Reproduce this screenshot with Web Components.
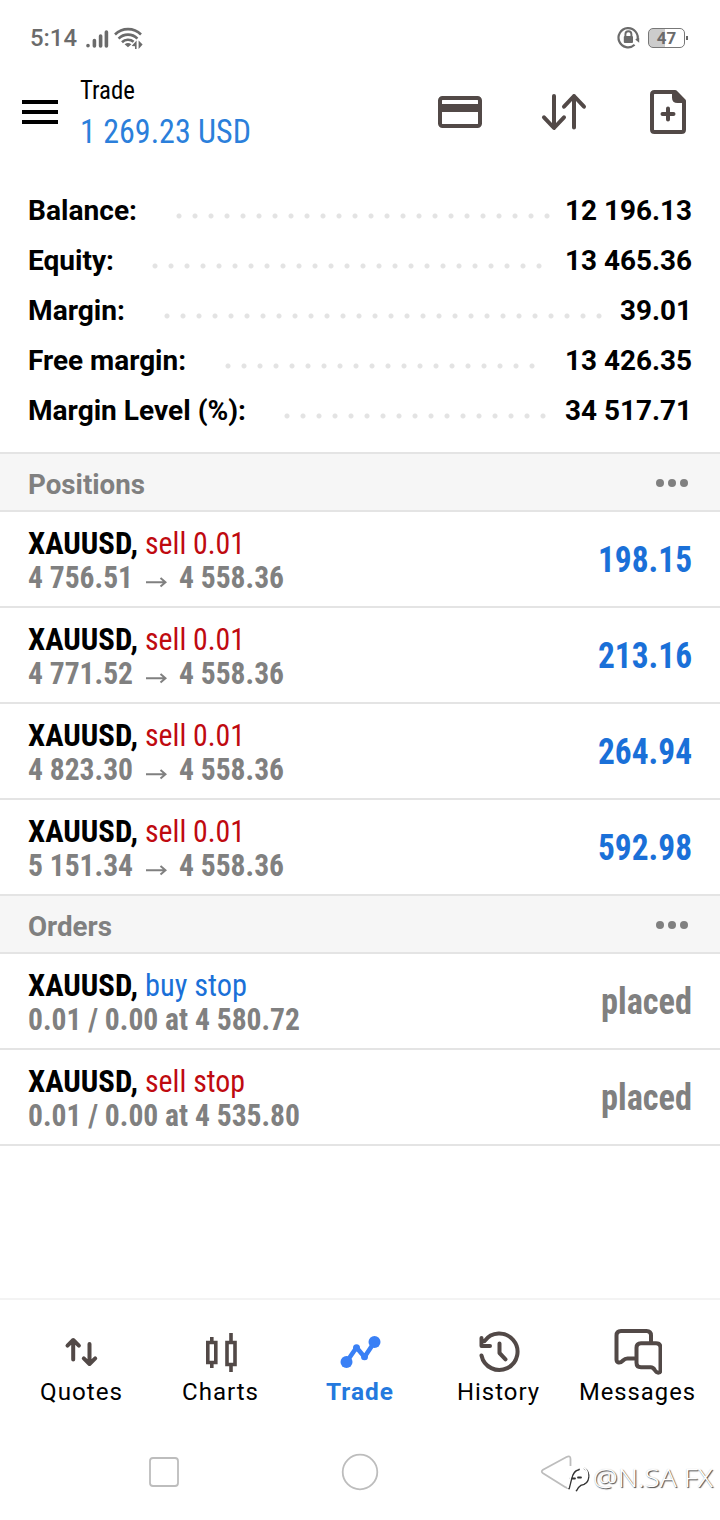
<!DOCTYPE html>
<html lang="en">
  <head>
    <meta charset="utf-8" />
    <title>Trade</title>
    <meta name="viewport" content="width=device-width, initial-scale=1" />

    <style>
      body {
        --ink: #524947;
        --blue: #1a70d8;
        --red: #bf0a10;
        --grey: #808080;
        --line: #e4e4e4;
        --condensed: 'Roboto Condensed', Roboto, 'Liberation Sans', sans-serif;
        margin: 0;
        width: 720px;
        height: 1520px;
        overflow: hidden;
        display: flex;
        flex-direction: column;
        background: #fff;
        color: #000;
        font-family: Roboto, 'Liberation Sans', sans-serif;
      }
      main {
        flex: 1;
      }
      .summary {
        padding: 34px 28px 16px;
        border-bottom: 2px solid var(--line);
      }
    </style>

    <template id="fit-text">
      <style>
        :host {
          display: inline-block;
          white-space: nowrap;
        }
        span {
          display: inline-block;
          transform-origin: 0 50%;
        }
      </style>
      <span><slot></slot></span>
    </template>

    <template id="status-bar">
      <style>
        :host {
          display: flex;
          height: 72px;
          padding: 0 32px 0 30px;
          box-sizing: border-box;
          color: #6b6b6b;
        }
        .time {
          font-size: 23px;
          font-weight: 500;
          line-height: 30px;
          margin: 24px 8px 0 0;
        }
        .gap {
          flex: 1;
        }
        svg {
          margin-top: 24px;
        }
        .battery {
          box-sizing: border-box;
          width: 37px;
          height: 20px;
          margin: 28px 0 0 8px;
          border: 1.5px solid #777;
          border-radius: 5px;
          background: linear-gradient(90deg, #ccc 47%, #fff 47%);
          font-size: 17px;
          font-weight: 700;
          line-height: 19px;
          text-align: center;
        }
        .nub {
          width: 2px;
          height: 4px;
          margin: 36px 0 0 1px;
          background: #666;
        }
      </style>
      <fit-text class="time" w="47"><slot name="time"></slot></fit-text>
      <svg width="60" height="28" viewBox="85 24 60 28" fill="none" stroke="#6b6b6b">
        <g stroke-width="3.6" stroke-linecap="round">
          <path d="M88 45.6v.1M94.4 40.5v5.4M100.6 36v9.9M106.4 32v13.9" />
        </g>
        <g stroke-width="2.6">
          <path d="M115 34.5a18.5 18.5 0 0 1 26 0M118.6 38.6a13 13 0 0 1 18.8 0M122 42.2a8.6 8.6 0 0 1 11.6-.4" />
        </g>
        <path d="M124.6 44.2q3.4-2.6 6.8 0l-3.4 3z" fill="#6b6b6b" stroke="none" />
        <path d="M136.6 40.5v8.5h-1.6v-2.8l-3.4-.2zM138.6 40.5v8.5l4-4.5z" fill="#6b6b6b" stroke="none" />
      </svg>
      <div class="gap"></div>
      <svg width="24" height="28" viewBox="616 24 24 28" fill="none" stroke="#6b6b6b" stroke-width="2.2">
        <path d="M637.4 40.2A9.6 9.6 0 1 0 634.6 44.8" />
        <path d="M635.2 39.4l4-1.6v5z" fill="#6b6b6b" stroke="none" />
        <path d="M625.4 36.5v-2.2a3 3 0 0 1 6 0v2.2" stroke-width="1.9" />
        <rect x="623.8" y="36" width="9.2" height="7" rx="1" fill="#6b6b6b" stroke="none" />
      </svg>
      <div class="battery"><slot name="battery"></slot></div>
      <div class="nub"></div>
    </template>

    <template id="trade-header">
      <style>
        :host {
          display: flex;
          height: 80px;
          padding: 0 28px 0 22px;
          box-sizing: border-box;
        }
        .menu {
          width: 36px;
          height: 24px;
          margin: 28px 22px 0 0;
        }
        .titles {
          flex: 1;
          padding-top: 3px;
          font-family: var(--condensed);
          font-stretch: 75%;
        }
        .title {
          display: block;
          font-size: 26px;
          line-height: 30px;
        }
        .profit {
          display: block;
          margin-top: 7px;
          font-size: 33px;
          line-height: 40px;
          color: #2b7fdb;
        }
        .actions {
          display: flex;
          gap: 56px;
          padding-top: 16px;
        }
      </style>
      <svg class="menu" viewBox="0 0 36 24">
        <path d="M0 2h36M0 12h36M0 22h36" stroke="#000" stroke-width="4" />
      </svg>
      <div class="titles">
        <fit-text class="title" w="55"><slot name="title"></slot></fit-text>
        <fit-text class="profit" w="171"><slot name="profit"></slot></fit-text>
      </div>
      <div class="actions">
        <svg width="48" height="48" viewBox="436 88 48 48" fill="none" stroke="#524947" stroke-width="4">
          <rect x="440" y="98" width="40" height="28" rx="2.5" />
          <path d="M440 108h40" stroke-width="8" />
        </svg>
        <svg width="48" height="48" viewBox="540 88 48 48" fill="none" stroke="#524947" stroke-width="4" stroke-linecap="round" stroke-linejoin="round">
          <path d="M554 96v31.5M544 117.300l10 10.700 10-10.700M574 127.500V96M564 106.700l10-10.700 10 10.700" />
        </svg>
        <svg width="48" height="48" viewBox="644 88 48 48" fill="none" stroke="#524947" stroke-width="4" stroke-linecap="round">
          <path d="M654.500 92h20.700l8.800 8.800v28.700q0 2.500-2.500 2.500h-27q-2.500 0-2.500-2.500v-35q0-2.500 2.500-2.500z" stroke-linejoin="round" />
          <path d="M672 91v6.500q0 5.500 5.500 5.500h7.500v-2.500l-9-9z" fill="#524947" stroke="none" />
          <path d="M662.500 114h11M668 108.500v11" />
        </svg>
      </div>
    </template>

    <template id="summary-row">
      <style>
        :host {
          display: flex;
          height: 50px;
          font-size: 28px;
          font-weight: 700;
          line-height: 50px;
        }
        .dots {
          height: 50px;
          background: radial-gradient(circle at 8px 8px, #e3e3e3 2px, transparent 3px) 0 21.5px / 16px 16px repeat-x;
        }
        .value {
          margin-left: auto;
        }
      </style>
      <div class="label"><fit-text><slot></slot></fit-text></div>
      <div class="dots"></div>
      <fit-text class="value"><slot name="value"></slot></fit-text>
    </template>

    <template id="section-head">
      <style>
        :host {
          display: flex;
          align-items: center;
          justify-content: space-between;
          box-sizing: border-box;
          height: 58px;
          padding: 0 32px 0 28px;
          border-bottom: 2px solid var(--line);
          background: #f6f6f6;
          color: var(--grey);
          font-size: 28px;
          font-weight: 700;
          line-height: 34px;
        }
        fit-text {
          padding-top: 5px;
        }
        svg {
          margin-top: 2px;
        }
      </style>
      <fit-text><slot></slot></fit-text>
      <svg width="32" height="8" viewBox="0 0 32 8" fill="#808080">
        <circle cx="4" cy="4" r="4" />
        <circle cx="16" cy="4" r="4" />
        <circle cx="28" cy="4" r="4" />
      </svg>
    </template>

    <template id="deal-row">
      <style>
        :host {
          display: flex;
          justify-content: space-between;
          box-sizing: border-box;
          height: 96px;
          padding: 14px 28px 0;
          border-bottom: 2px solid var(--line);
          font-family: var(--condensed);
          font-stretch: 75%;
          font-size: 32px;
          line-height: 34px;
        }
        .top {
          display: flex;
          gap: 7px;
          height: 34px;
        }
        .symbol,
        .details,
        .value {
          font-weight: 700;
        }
        .side {
          color: var(--red);
        }
        :host([side='buy']) .side {
          color: var(--blue);
        }
        .details {
          display: flex;
          height: 34px;
          color: var(--grey);
        }
        .details svg {
          margin: 0 12px 0 13px;
        }
        .value {
          margin-top: 16px;
          height: 36px;
          line-height: 36px;
          font-size: 36px;
          color: var(--blue);
        }
        :host([pending]) .value {
          color: var(--grey);
        }
      </style>
      <div>
        <div class="top">
          <fit-text class="symbol" w="110"><slot name="symbol"></slot></fit-text>
          <fit-text class="side"><slot name="side"></slot></fit-text>
        </div>
        <div class="details"></div>
      </div>
      <fit-text class="value"><slot name="value"></slot></fit-text>
    </template>

    <template id="tab-item">
      <style>
        :host {
          display: flex;
          flex-direction: column;
          align-items: center;
          padding-top: 28px;
          font-size: 24px;
          line-height: 28px;
        }
        svg {
          width: 48px;
          height: 48px;
          margin-bottom: 2px;
        }
        :host([active]) {
          color: #2479de;
          font-weight: 700;
        }
        fit-text {
          letter-spacing: 1px;
        }
      </style>
      <svg fill="none" stroke="#524947" stroke-width="4" stroke-linecap="round" stroke-linejoin="round"></svg>
      <fit-text><slot></slot></fit-text>
    </template>

    <template id="tab-bar">
      <style>
        :host {
          display: grid;
          grid-template-columns: repeat(5, 1fr);
          height: 124px;
          padding: 0 13px 0 12px;
          border-top: 2px solid #f3f3f3;
        }
      </style>
      <slot></slot>
    </template>

    <template id="system-nav">
      <style>
        :host {
          display: grid;
          position: relative;
          grid-template-columns: repeat(3, 1fr);
          place-items: center;
          height: 96px;
          padding: 0 66px;
        }
        .mark {
          position: absolute;
          left: 566px;
          top: 36px;
          display: flex;
          color: #fff;
          font-family: 'Noto Sans', sans-serif;
          font-size: 26px;
          font-weight: 300;
          line-height: 34px;
          text-shadow: 1px 1px 1px #444, 0 0 1px #ccc;
        }
        .mark svg {
          margin: 5px 3px 0 0;
        }
      </style>
      <svg width="40" height="40" fill="none" stroke="#bdbdbd" stroke-width="1.8">
        <rect x="6" y="6" width="28" height="28" rx="3" />
      </svg>
      <svg width="40" height="40" fill="none" stroke="#bdbdbd" stroke-width="1.8">
        <circle cx="20" cy="20" r="17.300" />
      </svg>
      <svg width="40" height="40" fill="none" stroke="#bdbdbd" stroke-width="1.8" stroke-linejoin="round">
        <path d="M34.500 14V7q0-4-4-2L7 17.700q-2.500 1.800 0 3.600L29 35q2 1.300 4 1.300" />
      </svg>
      <div class="mark">
        <svg width="24" height="28" viewBox="0 0 24 28" fill="none" stroke-linecap="round">
          <g id="logo" stroke="#333" stroke-width="1.8">
            <path d="M3 23.500l2.500-10Q7.500 5.500 13 4.500M4.500 13.500h4.500M12 12.500h3M18.500 3.500q4.500 3 4 9-.8 7-7.500 7.500-3 2-4.500 5.500" />
          </g>
          <path d="M2 22.500l2.500-10Q6.500 4.500 12 3.500M17.500 2.500q4.500 3 4 9-.8 7-7.500 7.500-3 2-4.500 5.500" stroke="#fff" stroke-width="1.600" />
        </svg>
        <fit-text w="120"><slot></slot></fit-text>
      </div>
    </template>
  </head>

  <body>
    <status-bar>
      <span slot="time">5:14</span>
      <span slot="battery">47</span>
    </status-bar>
    <trade-header>
      <span slot="title">Trade</span>
      <span slot="profit">1 269.23 USD</span>
    </trade-header>

    <main>
      <div class="summary">
        <summary-row w="109" start="142.500" dots="24" vw="127">Balance:<span slot="value">12 196.13</span></summary-row>
        <summary-row w="86" start="119.300" dots="25" vw="127">Equity:<span slot="value">13 465.36</span></summary-row>
        <summary-row w="97" start="130.500" dots="28" vw="72">Margin:<span slot="value">39.01</span></summary-row>
        <summary-row w="158" start="191.500" dots="20" vw="127">Free margin:<span slot="value">13 426.35</span></summary-row>
        <summary-row w="218" start="251.300" dots="17" vw="127">Margin Level (%):<span slot="value">34 517.71</span></summary-row>
      </div>

      <section-head w="117">Positions</section-head>
      <deal-row w="100" vw="94" from="4 756.51" to="4 558.36">
        <span slot="symbol">XAUUSD,</span><span slot="side">sell 0.01</span><span slot="value">198.15</span>
      </deal-row>
      <deal-row w="100" vw="94" from="4 771.52" to="4 558.36">
        <span slot="symbol">XAUUSD,</span><span slot="side">sell 0.01</span><span slot="value">213.16</span>
      </deal-row>
      <deal-row w="100" vw="94" from="4 823.30" to="4 558.36">
        <span slot="symbol">XAUUSD,</span><span slot="side">sell 0.01</span><span slot="value">264.94</span>
      </deal-row>
      <deal-row w="100" vw="94" from="5 151.34" to="4 558.36">
        <span slot="symbol">XAUUSD,</span><span slot="side">sell 0.01</span><span slot="value">592.98</span>
      </deal-row>

      <section-head w="84">Orders</section-head>
      <deal-row pending side="buy" w="102" vw="91" details="0.01 / 0.00 at 4 580.72">
        <span slot="symbol">XAUUSD,</span><span slot="side">buy stop</span><span slot="value">placed</span>
      </deal-row>
      <deal-row pending side="sell" w="100" vw="91" details="0.01 / 0.00 at 4 535.80">
        <span slot="symbol">XAUUSD,</span><span slot="side">sell stop</span><span slot="value">placed</span>
      </deal-row>
    </main>

    <tab-bar>
      <tab-item icon="quotes" w="83">Quotes</tab-item>
      <tab-item icon="charts" w="77">Charts</tab-item>
      <tab-item icon="trade" w="68" active>Trade</tab-item>
      <tab-item icon="history" w="83">History</tab-item>
      <tab-item icon="messages" w="117">Messages</tab-item>
    </tab-bar>
    <system-nav>@N.SA FX</system-nav>

    <script>
      const icons = {
        quotes: {
          box: '57.500 1328 48 48',
          art: '<path d="M72.700 1359.500v-18M67 1345.700l5.700-5.700 5.700 5.700M89 1344v18.500M83.300 1358.300l5.700 5.700 5.700-5.700"/>',
        },
        charts: {
          box: '196.500 1328 48 48',
          art: `<g stroke-linecap="butt" stroke-linejoin="miter" stroke-width="3.600">
            <path d="M207.300 1342.500h8v20h-8zM211.300 1337v5M211.300 1363v5"/>
            <path d="M226.500 1342.500h8v22h-8zM230.500 1333v9M230.500 1365v7"/></g>`,
        },
        trade: {
          box: '335.500 1328 48 48',
          art: `<path d="M346 1362l10-14.500 8 9.500 10-15" stroke="#3a80f5" stroke-width="4.600"/>
            <g fill="#3a80f5" stroke="none"><circle cx="346" cy="1362" r="6"/><circle cx="374" cy="1342" r="6"/>
            <circle cx="356" cy="1347.700" r="3.500"/><circle cx="364" cy="1356.700" r="3.500"/></g>`,
        },
        history: {
          box: '474.500 1328 48 48',
          art: `<path d="M481 1355.500A18.200 18.200 0 1 0 484 1341.200M481 1338v8h8.500M499 1343.500v9.500l6 6.300"/>`,
        },
        messages: {
          box: '613.500 1328 48 48',
          art: `<path d="M634 1358.500h-7q-2.500 0-4.500 2-2.500 2.500-4.500 2-2-.5-2-3v-24q0-4.500 4.500-4.500h25.500q4.500 0 4.500 4.500v6"/>
            <path d="M640.500 1343.300h15q4.500 0 4.500 4.500v22q0 2.500-1.800 2.800-2 .4-4-2.600-1.500-2.700-4-2.700h-9.700q-4.500 0-4.500-4.500v-15q0-4.500 4.500-4.500z"/>`,
        },
      };

      // attaches a shadow root with a copy of the template named like the tag
      const attach = (el) => {
        const root = el.attachShadow({ mode: 'open' });
        const tpl = document.getElementById(el.localName);
        root.appendChild(tpl.content.cloneNode(true));
        return root;
      };

      class BaseElement extends HTMLElement {
        constructor() {
          super();
          attach(this);
        }
        $(selector) {
          return this.shadowRoot.querySelector(selector);
        }
        fit(selector, attr = 'w') {
          this.$(selector).setAttribute('w', this.getAttribute(attr));
        }
      }

      customElements.define('status-bar', class extends BaseElement {});
      customElements.define('trade-header', class extends BaseElement {});
      customElements.define('tab-bar', class extends BaseElement {});
      customElements.define('system-nav', class extends BaseElement {});

      customElements.define(
        'summary-row',
        class extends BaseElement {
          connectedCallback() {
            this.fit('.label fit-text');
            this.fit('.value', 'vw');
            this.$('.label').style.width = this.getAttribute('start') + 'px';
            this.$('.dots').style.width = this.getAttribute('dots') * 16 + 'px';
          }
        }
      );

      customElements.define(
        'section-head',
        class extends BaseElement {
          connectedCallback() {
            this.fit('fit-text');
          }
        }
      );

      customElements.define(
        'deal-row',
        class extends BaseElement {
          connectedCallback() {
            this.fit('.side');
            this.fit('.value', 'vw');
            const details = this.getAttribute('details');
            this.$('.details').innerHTML = details
              ? `<fit-text w="272">${details}</fit-text>`
              : `<fit-text w="105">${this.getAttribute('from')}</fit-text>
                <svg width="21" height="34" fill="none" stroke="#808080" stroke-width="2">
                  <path d="M0 22.300h19M14.500 18l5 4.300-5 4.300"/>
                </svg>
                <fit-text w="105">${this.getAttribute('to')}</fit-text>`;
          }
        }
      );

      customElements.define(
        'tab-item',
        class extends BaseElement {
          connectedCallback() {
            const icon = icons[this.getAttribute('icon')];
            this.$('svg').setAttribute('viewBox', icon.box);
            this.$('svg').innerHTML = icon.art;
            this.fit('fit-text');
          }
        }
      );

      // squeezes its text to the width in the w attribute
      customElements.define(
        'fit-text',
        class extends BaseElement {
          connectedCallback() {
            const width = Number(this.getAttribute('w'));
            const span = this.$('span');
            if (!width || !span.offsetWidth) return;
            this.style.width = width + 'px';
            span.style.transform = `scaleX(${width / span.getBoundingClientRect().width})`;
          }
        }
      );
    </script>
  </body>
</html>
